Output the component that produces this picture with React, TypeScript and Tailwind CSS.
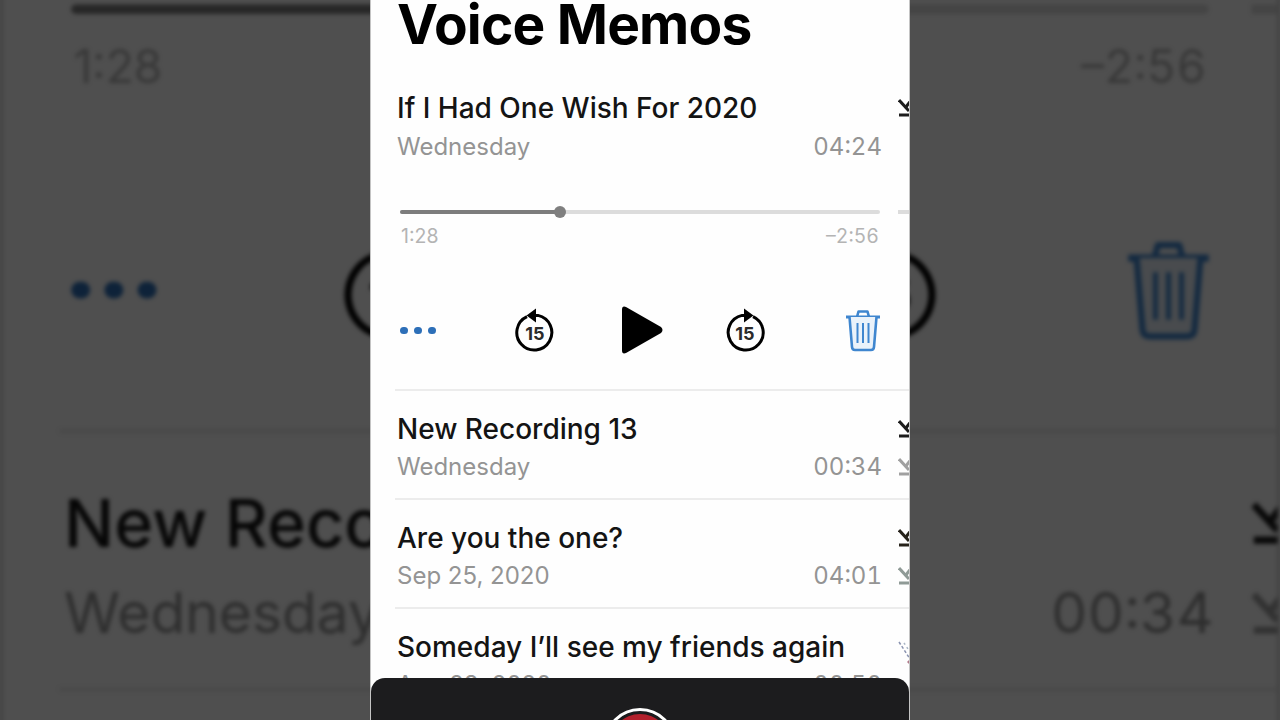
import React from "react";

const font = { fontFamily: '"Inter", "Liberation Sans", sans-serif' };

interface Memo {
  title: string;
  date: string;
  length: string;
  glyphDark: string;
  glyphLight?: string;
}

const memos: Memo[] = [
  { title: "New Recording 13", date: "Wednesday", length: "00:34", glyphDark: "#1c1c1c", glyphLight: "#a0a0a0" },
  { title: "Are you the one?", date: "Sep 25, 2020", length: "04:01", glyphDark: "#26221a", glyphLight: "#8f9a96" },
  { title: "Someday I’ll see my friends again", date: "Aug 28, 2020", length: "00:50", glyphDark: "dashed" },
];

// clipped glyph poking in from the next column on the right edge
const EdgeGlyph = ({ color }: { color: string }) => (
  <svg width="24" height="20" viewBox="0 0 24 20" fill="none" stroke={color} strokeWidth="3">
    <path d="M1 2 L11 13" />
    <path d="M1 17 H13" />
    <path d="M14 1 L8 9" />
  </svg>
);

const DashedGlyph = () => (
  <svg width="24" height="24" viewBox="0 0 24 24" fill="none" strokeWidth="1.5" className="mt-[12px]">
    <path d="M1 1 L12 18" stroke="#8a93b0" strokeDasharray="3 2" />
    <path d="M6 2 L14 14" stroke="#a9b5c4" strokeDasharray="2 3" />
    <path d="M10 20 L13 23" stroke="#b07a8a" strokeWidth="3" />
  </svg>
);

const Skip15 = ({ back }: { back?: boolean }) => (
  <svg width="40" height="44" viewBox="0 0 40 44" fill="none">
    {back ? (
      <>
        <path d="M12 8.6 A17.5 17.5 0 1 0 23 7.4 H19" stroke="#000" strokeWidth="3" />
        <path d="M21 0.5 L11.5 7.4 L21 14.4 Z" fill="#000" />
      </>
    ) : (
      <>
        <path d="M28 8.6 A17.5 17.5 0 1 1 17 7.4 H21" stroke="#000" strokeWidth="3" />
        <path d="M19 0.5 L28.5 7.4 L19 14.4 Z" fill="#000" />
      </>
    )}
    <text x="20" y="31.5" textAnchor="middle" fontSize="18" fontWeight="700" fill="#2a2a2a" style={font}>
      15
    </text>
  </svg>
);

const Trash = () => (
  <svg width="36" height="44" viewBox="0 0 36 44" fill="none" stroke="#3f86cf" strokeWidth="2.6" strokeLinejoin="round">
    <path d="M1 9 H35" strokeWidth="3" />
    <path d="M12 9 L13.5 3.5 H22.5 L24 9" />
    <path d="M4.5 9 L7 39 Q7.2 42 10 42 H26 Q28.8 42 29 39 L31.5 9" fill="#eaf2fa" />
    <path d="M12.5 15 V35 M18 15 V35 M23.5 15 V35" strokeWidth="2" />
  </svg>
);

const PlayIcon = () => (
  <svg width="44" height="50" viewBox="0 0 44 50" fill="#000">
    <path d="M2 4.5 Q2 0.5 6 2 L41 22 Q44 25 41 28 L6 48 Q2 49.5 2 45.5 Z" />
  </svg>
);

const PhoneScreen = () => (
  <div className="w-[540px] h-[720px] shrink-0 flex flex-col bg-[#fefefe] border-x border-[#c4c4c4] overflow-hidden" style={font}>
    <div className="flex-1 min-h-0 overflow-hidden pl-[26px]">
      <div className="-mt-[8px] h-[64px] text-[55px] leading-[64px] font-bold tracking-[-0.8px] text-black">Voice Memos</div>

      {/* expanded recording */}
      <div className="mt-[16px] pt-[18px] w-[560px]">
        <div className="flex h-[36px] items-center">
          <div className="w-[501px] text-[28px] font-medium text-[#141414]">If I Had One Wish For 2020</div>
          <EdgeGlyph color="#1c1c1c" />
        </div>
        <div className="w-[485px] h-[42px] flex items-center justify-between text-[24px] text-[#949494]">
          <span>Wednesday</span>
          <span className="tabular-nums">04:24</span>
        </div>

        <div className="mt-[42px] flex items-center">
          <div className="ml-[3px] w-[480px] h-[4px] bg-[#dcdcdc] rounded-full flex items-center">
            <div className="w-[160px] h-[4px] bg-[#7d7d7d] rounded-l-full" />
            <div className="-ml-[6px] w-[12px] h-[12px] rounded-full bg-[#7f7f7f]" />
          </div>
          <div className="ml-[18px] w-[30px] h-[4px] bg-[#dcdcdc]" />
        </div>
        <div className="mt-[11px] ml-[4px] w-[478px] h-[24px] flex items-center justify-between text-[19.5px] text-[#b4b4b4]">
          <span>1:28</span>
          <span className="tabular-nums">–2:56</span>
        </div>

        <div className="mt-[56px] h-[50px] flex items-center">
          <div className="ml-[3px] mt-[1px] flex gap-[6.5px]">
            <div className="w-[7.5px] h-[7.5px] rounded-full bg-[#2d6fb8]" />
            <div className="w-[7.5px] h-[7.5px] rounded-full bg-[#2d6fb8]" />
            <div className="w-[7.5px] h-[7.5px] rounded-full bg-[#2d6fb8]" />
          </div>
          <div className="ml-[79px]"><Skip15 back /></div>
          <div className="ml-[65px]"><PlayIcon /></div>
          <div className="ml-[61px]"><Skip15 /></div>
          <div className="ml-[80px]"><Trash /></div>
        </div>
      </div>

      <div className="mt-[34px] -ml-[2px] h-[2px] bg-[#ececec]" />

      {memos.map((memo) => (
        <div key={memo.title} className="w-[560px]">
          <div className="pt-[20px] pb-[11px]">
            <div className="flex h-[36px] items-center">
              <div className="w-[501px] text-[28px] font-medium text-[#141414]">{memo.title}</div>
              {memo.glyphDark === "dashed" ? <DashedGlyph /> : <EdgeGlyph color={memo.glyphDark} />}
            </div>
            <div className="flex h-[40px] items-center">
              <div className="w-[485px] flex items-center justify-between text-[24px] text-[#949494]">
                <span>{memo.date}</span>
                <span className="tabular-nums">{memo.length}</span>
              </div>
              {memo.glyphLight && (
                <div className="ml-[16px]">
                  <EdgeGlyph color={memo.glyphLight} />
                </div>
              )}
            </div>
          </div>
          <div className="-ml-[2px] h-[2px] bg-[#ececec]" />
        </div>
      ))}
    </div>

    {/* record bar */}
    <div className="h-[42px] shrink-0 bg-[#1c1c1e] rounded-t-[14px] flex justify-center overflow-hidden">
      <div className="mt-[30px] w-[72px] h-[72px] shrink-0 rounded-full border-[3px] border-white p-[3px]">
        <div className="w-full h-full rounded-full bg-[#b3202c]" />
      </div>
    </div>
  </div>
);

export default function App() {
  return (
    <div className="relative w-full h-[720px] overflow-hidden bg-[#4f4f4f]">
      {/* zoomed, dimmed copy of the same video frame behind the phone */}
      <div className="absolute inset-0 flex justify-center scale-[2.37] brightness-[0.31] blur-[0.8px]">
        <PhoneScreen />
      </div>
      <div className="relative flex justify-center">
        <PhoneScreen />
      </div>
    </div>
  );
}
